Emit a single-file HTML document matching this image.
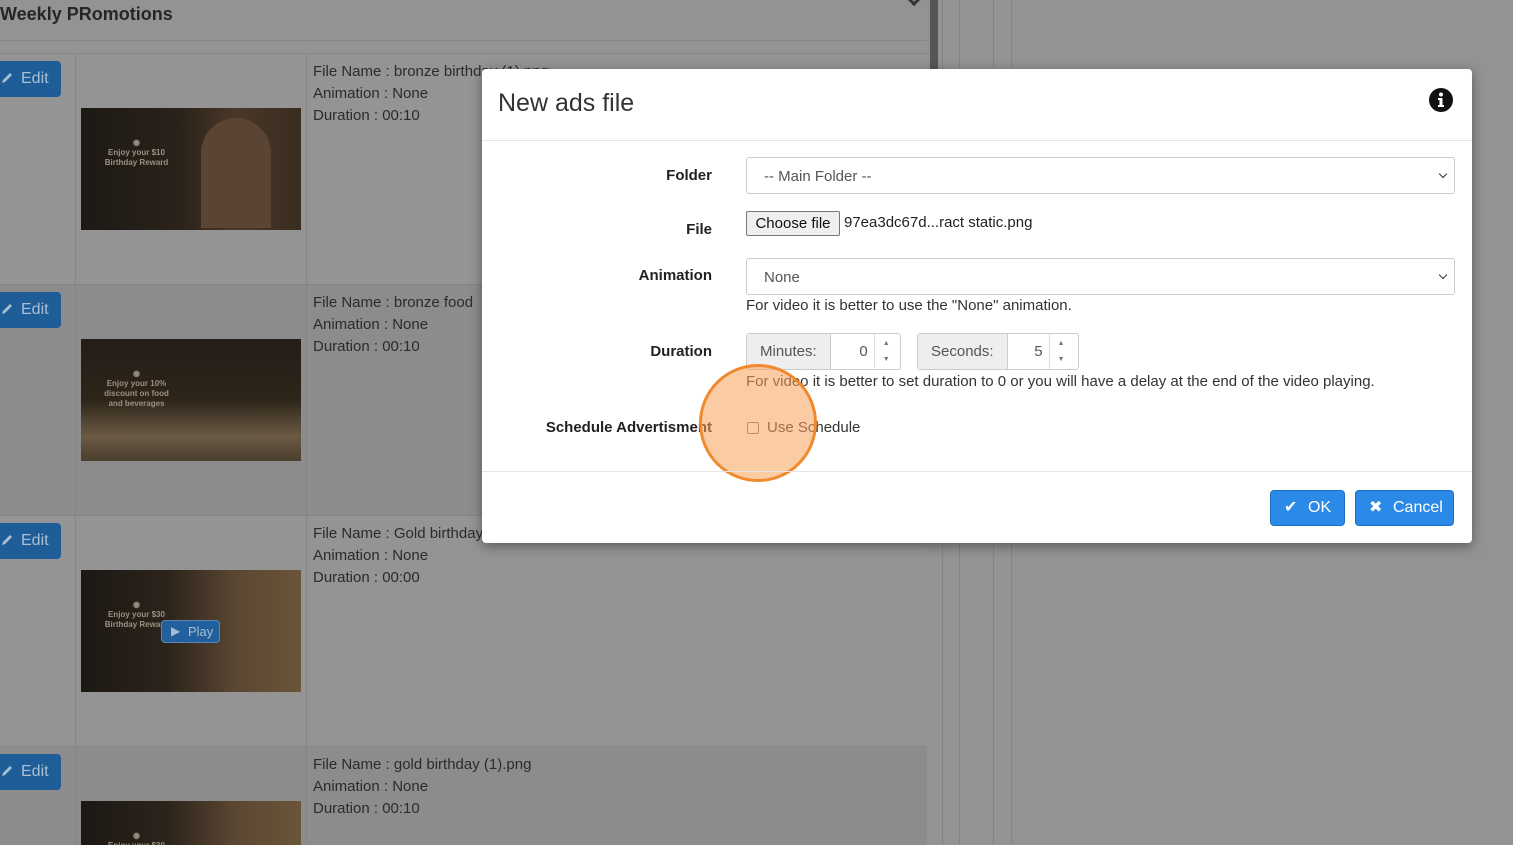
<!DOCTYPE html>
<html style="width:1513px;height:845px;overflow:hidden"><head><meta charset="utf-8"><style>
*{box-sizing:border-box;margin:0;padding:0}
body{width:1513px;height:845px;overflow:hidden;background:#939393;font-family:"Liberation Sans",sans-serif;position:relative}
.abs{position:absolute}
.row{position:absolute;left:0;width:927px;height:231px;border-top:1px solid #858585}
.row.a{background:#949494}.row.b{background:#8c8c8c}
.edit{position:absolute;left:-6px;top:7px;width:67px;height:36px;background:#1f5d99;border-radius:4px;color:#a9bfd4;font-size:16px;line-height:36px;padding-left:27px}
.edit svg{position:absolute;left:6px;top:10px}
.thumb{position:absolute;left:81px;top:54px;width:220px;height:122px;background:linear-gradient(90deg,#1d1915 0%,#2a221a 45%,#4a3828 70%,#3a2c20 100%);overflow:hidden}
.thumb .t{position:absolute;left:18px;top:30px;width:75px;text-align:center;color:#9d9080;font-size:8px;line-height:10px;font-weight:bold}
.thumb .p{position:absolute;right:30px;top:10px;width:70px;height:110px;border-radius:35px 35px 0 0;background:#5a4534}
.info{position:absolute;left:313px;top:7px;color:#2b2b2b;font-size:15px;line-height:22px}
.vl{position:absolute;top:53px;height:792px;width:1px;background:#858585}
.modal{position:absolute;left:482px;top:69px;width:990px;height:474px;background:#fff;border-radius:4px;box-shadow:0 3px 12px rgba(0,0,0,.4)}
.lbl{position:absolute;right:760px;font-weight:bold;font-size:15px;color:#222;text-align:right;white-space:nowrap}
.sel{position:absolute;left:264px;width:709px;height:37px;border:1px solid #ccc;border-radius:3px;font-size:15px;color:#555;padding:10px 17px}
.sel:after{content:"";position:absolute;right:8px;top:13px;width:5px;height:5px;border-right:1.5px solid #333;border-bottom:1.5px solid #333;transform:rotate(45deg)}
.txt{position:absolute;font-size:15px;color:#333}
.grp{position:absolute;top:264px;height:37px;border:1px solid #ccc;border-radius:3px;display:flex;font-size:15px}
.grp .ad{background:#eee;color:#555;border-right:1px solid #ccc;padding:9px 13px}
.grp .v{color:#555;text-align:right;padding:9px 6px}
.grp .sp{width:24px;border-left:1px solid #ddd;font-size:7px;color:#777;text-align:center;line-height:16px;padding-top:2px}
.btn{position:absolute;top:421px;height:36px;background:#2b89e8;border:1px solid #1f6fc2;border-radius:4px;color:#fff;font-size:16px;line-height:34px}
</style></head><body>
<div class="abs" style="left:0;top:4px;font-size:18px;font-weight:bold;color:#262626">Weekly PRomotions</div>
<div class="abs" style="left:0;top:40px;width:927px;height:1px;background:#858585"></div>
<div class="abs" style="left:909px;top:-6px;width:10px;height:10px;border-right:3px solid #333;border-bottom:3px solid #333;transform:rotate(45deg)"></div>
<div class="abs" style="left:930px;top:0;width:8px;height:70px;background:#555"></div>
<div class="abs" style="left:942px;top:0;width:1px;height:845px;background:#848484"></div>
<div class="abs" style="left:959px;top:0;width:1px;height:845px;background:#848484"></div>
<div class="abs" style="left:993px;top:0;width:1px;height:845px;background:#848484"></div>
<div class="abs" style="left:1011px;top:0;width:1px;height:845px;background:#848484"></div>

<div class="row a" style="top:53px"><div class="edit"><svg width="14" height="14"><path d="M2 12 L3 9 L10 2 L12 4 L5 11Z" fill="#a9bfd4"/></svg>Edit</div><div class="thumb"><div class="p"></div><div class="t">◉<br>Enjoy your $10 Birthday Reward</div></div><div class="info">File Name : bronze birthday (1).png<br>Animation : None<br>Duration : 00:10</div></div>
<div class="row b" style="top:284px"><div class="edit"><svg width="14" height="14"><path d="M2 12 L3 9 L10 2 L12 4 L5 11Z" fill="#a9bfd4"/></svg>Edit</div><div class="thumb" style="background:linear-gradient(180deg,#231d17 0%,#2e2519 50%,#6a5a44 80%,#4b3e2e 100%)"><div class="t">◉<br>Enjoy your 10% discount on food and beverages</div></div><div class="info">File Name : bronze food<br>Animation : None<br>Duration : 00:10</div></div>
<div class="row a" style="top:515px"><div class="edit"><svg width="14" height="14"><path d="M2 12 L3 9 L10 2 L12 4 L5 11Z" fill="#a9bfd4"/></svg>Edit</div><div class="thumb" style="background:linear-gradient(90deg,#1c1814 0%,#2c241b 40%,#5b4632 70%,#6a5538 100%)"><div class="t">◉<br>Enjoy your $30 Birthday Reward</div><div class="abs" style="left:80px;top:50px;width:59px;height:23px;background:#22609d;border:1px solid #5a86b3;border-radius:4px;color:#a6bcd2;font-size:13px;line-height:21px;padding-left:26px">Play<span class="abs" style="left:9px;top:0;font-size:12px">▶</span></div></div><div class="info">File Name : Gold birthday<br>Animation : None<br>Duration : 00:00</div></div>
<div class="row b" style="top:746px;height:99px;overflow:hidden"><div class="edit"><svg width="14" height="14"><path d="M2 12 L3 9 L10 2 L12 4 L5 11Z" fill="#a9bfd4"/></svg>Edit</div><div class="thumb" style="background:linear-gradient(90deg,#1c1814 0%,#2c241b 40%,#5b4632 70%,#6a5538 100%)"><div class="t">◉<br>Enjoy your $30 Birthday Reward</div></div><div class="info">File Name : gold birthday (1).png<br>Animation : None<br>Duration : 00:10</div></div>
<div class="vl" style="left:75px"></div><div class="vl" style="left:306px"></div>

<div class="modal">
<div class="abs" style="left:16px;top:20px;font-size:25px;color:#333">New ads file</div>
<svg class="abs" style="left:946px;top:18px" width="26" height="26" viewBox="0 0 26 26"><circle cx="13" cy="13" r="12" fill="#111"/><circle cx="13" cy="7.5" r="2" fill="#fff"/><path d="M10 11h4.5v7h1.5v2h-6v-2h1.5v-5h-1.5z" fill="#fff"/></svg>
<div class="abs" style="left:0;top:71px;width:990px;height:1px;background:#e5e5e5"></div>
<div class="lbl" style="top:98px">Folder</div>
<div class="sel" style="top:88px">-- Main Folder --</div>
<div class="lbl" style="top:152px">File</div>
<div class="abs" style="left:264px;top:142px;width:94px;height:25px;background:#efefef;border:1px solid #767676;border-radius:2px;font-size:15px;color:#111;text-align:center;line-height:23px">Choose file</div>
<div class="txt" style="left:362px;top:145px;color:#222">97ea3dc67d...ract static.png</div>
<div class="lbl" style="top:198px">Animation</div>
<div class="sel" style="top:189px">None</div>
<div class="txt" style="left:264px;top:228px">For video it is better to use the "None" animation.</div>
<div class="lbl" style="top:274px">Duration</div>
<div class="grp" style="left:264px;width:155px"><div class="ad">Minutes:</div><div class="v" style="width:43px">0</div><div class="sp">▲<br>▼</div></div>
<div class="grp" style="left:435px;width:162px"><div class="ad">Seconds:</div><div class="v" style="width:41px">5</div><div class="sp">▲<br>▼</div></div>
<div class="txt" style="left:264px;top:304px">For video it is better to set duration to 0 or you will have a delay at the end of the video playing.</div>
<div class="lbl" style="top:350px">Schedule Advertisment</div>
<div class="abs" style="left:265px;top:353px;width:12px;height:12px;border:1px solid #777;border-radius:2px"></div>
<div class="txt" style="left:285px;top:350px">Use Schedule</div>
<div class="abs" style="left:217px;top:295px;width:118px;height:118px;border-radius:50%;background:rgba(248,160,90,.55);border:3px solid #f08a2e"></div>
<div class="abs" style="left:0;top:402px;width:990px;height:1px;background:#e5e5e5"></div>
<div class="btn" style="left:788px;width:75px;padding-left:37px"><span class="abs" style="left:13px;top:0">✔</span>OK</div>
<div class="btn" style="left:873px;width:99px;padding-left:37px"><span class="abs" style="left:13px;top:0">✖</span>Cancel</div>
</div>
</body></html>
